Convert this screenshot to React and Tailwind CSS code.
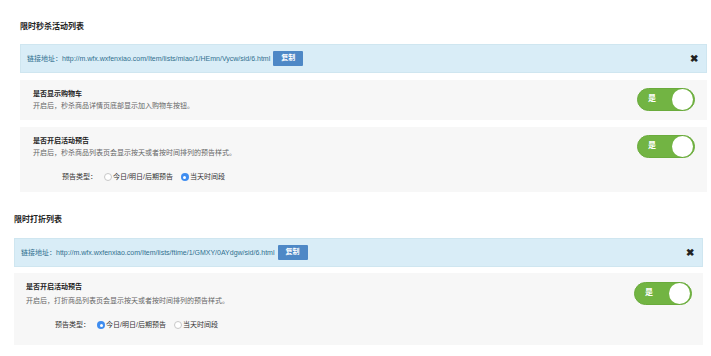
import React from "react";

const FONT = { fontFamily: '"Liberation Sans", "Noto Sans CJK SC", sans-serif' };

function Toggle() {
  return (
    <div className="relative w-[58px] h-[23px] rounded-full bg-[#72b443] border border-[#6aab3c] shrink-0">
      <span className="absolute left-[10px] top-[5px] text-[8px] leading-[10px] text-white font-bold">是</span>
      <span className="absolute right-[1px] top-[0px] w-[21px] h-[21px] rounded-full bg-white"></span>
    </div>
  );
}

function Radio({ checked, label }) {
  return (
    <div className="flex items-center gap-[1px]">
      {checked ? (
        <span className="w-[8px] h-[8px] rounded-full bg-[#3f8df0] flex items-center justify-center">
          <span className="w-[3px] h-[3px] rounded-full bg-white"></span>
        </span>
      ) : (
        <span className="w-[8px] h-[8px] rounded-full bg-white border border-[#c8c8c8]"></span>
      )}
      <span className="text-[7px] leading-[10px] text-[#333]">{label}</span>
    </div>
  );
}

function Alert({ url, mt }) {
  return (
    <div className={`${mt} h-[29px] bg-[#d9edf7] border border-[#cfe6f0] flex items-center pl-[6px] pr-[8px]`}>
      <span className="text-[7px] leading-[10px] text-[#31708f]">链接地址：{url}</span>
      <span className="ml-[3px] w-[30px] h-[15px] bg-[#4e88c6] rounded-[1px] text-white text-[7px] font-bold flex items-center justify-center">复制</span>
      <span className="ml-auto text-[10px] leading-[10px] text-[#222] font-bold">✖</span>
    </div>
  );
}

export default function App() {
  return (
    <div className="w-[711px] h-[356px] bg-white overflow-hidden" style={FONT}>
      {/* Section 1 */}
      <div className="ml-[20px] w-[687px] pt-[22px]">
        <div className="text-[8px] leading-[10px] font-bold text-[#222]">限时秒杀活动列表</div>
        <Alert mt="mt-[12px]" url="http://m.wfx.wxfenxiao.com/Item/lists/miao/1/HEmn/Vycw/sid/6.html" />
        <div className="mt-[7px] h-[40px] bg-[#f7f7f7] flex items-start pl-[13px] pr-[12px] pt-[8px]">
          <div className="flex-1 pt-[1px]">
            <div className="text-[7px] leading-[10px] font-bold text-[#222]">是否显示购物车</div>
            <div className="mt-[2px] text-[7px] leading-[10px] text-[#666]">开启后，秒杀商品详情页底部显示加入购物车按钮。</div>
          </div>
          <Toggle />
        </div>
        <div className="mt-[7px] h-[65px] bg-[#f7f7f7] flex items-start pl-[13px] pr-[12px] pt-[8px]">
          <div className="flex-1 pt-[1px]">
            <div className="text-[7px] leading-[10px] font-bold text-[#222]">是否开启活动预告</div>
            <div className="mt-[2px] text-[7px] leading-[10px] text-[#666]">开启后，秒杀商品列表页会显示按天或者按时间排列的预告样式。</div>
            <div className="mt-[14px] ml-[29px] flex items-center">
              <span className="text-[7px] leading-[10px] text-[#333] mr-[7px]">预告类型：</span>
              <Radio label="今日/明日/后期预告" />
              <div className="ml-[8px]"><Radio checked label="当天时间段" /></div>
            </div>
          </div>
          <Toggle />
        </div>
      </div>

      {/* Section 2 */}
      <div className="ml-[14px] w-[689px] mt-[23px]">
        <div className="text-[8px] leading-[10px] font-bold text-[#222]">限时打折列表</div>
        <Alert mt="mt-[13px]" url="http://m.wfx.wxfenxiao.com/Item/lists/ftime/1/GMXY/0AYdgw/sid/6.html" />
        <div className="mt-[6px] h-[72px] bg-[#f7f7f7] flex items-start pl-[12px] pr-[11px] pt-[9px]">
          <div className="flex-1 pt-[0px]">
            <div className="text-[7px] leading-[10px] font-bold text-[#222]">是否开启活动预告</div>
            <div className="mt-[4px] text-[7px] leading-[10px] text-[#666]">开启后，打折商品列表页会显示按天或者按时间排列的预告样式。</div>
            <div className="mt-[14px] ml-[29px] flex items-center">
              <span className="text-[7px] leading-[10px] text-[#333] mr-[7px]">预告类型：</span>
              <Radio checked label="今日/明日/后期预告" />
              <div className="ml-[8px]"><Radio label="当天时间段" /></div>
            </div>
          </div>
          <Toggle />
        </div>
      </div>
    </div>
  );
}
